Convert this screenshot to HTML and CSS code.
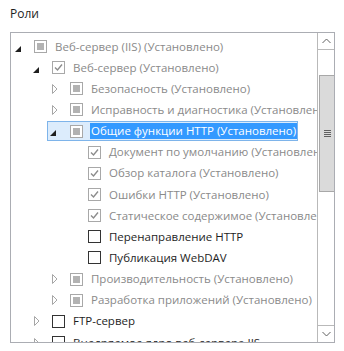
FILE: index.html
```html
<!DOCTYPE html>
<html>
<head>
<meta charset="utf-8">
<link rel="stylesheet" href="styles.css">
</head>
<body>
<div class="title">Роли</div>
<div class="box">
  <div class="tree">
    <div class="row l0"><span class="arr"><svg class="exp" width="6" height="6" viewBox="0 0 6 6"><path d="M0 6H6V0Z"/></svg></span><span class="cb ind dis"></span><span class="txt dim">Веб-сервер (IIS) (Установлено)</span></div>
    <div class="row l1"><span class="arr"><svg class="exp" width="6" height="6" viewBox="0 0 6 6"><path d="M0 6H6V0Z"/></svg></span><span class="cb chk dis"><svg width="11" height="11" viewBox="0 0 11 11"><path d="M2 5.5L4.5 8L9 2.5"/></svg></span><span class="txt dim">Веб-сервер (Установлено)</span></div>
    <div class="row l2"><span class="arr"><svg class="col" width="6" height="10" viewBox="0 0 6 10"><path d="M0.5 0.5L5 5L0.5 9.5Z"/></svg></span><span class="cb ind dis"></span><span class="txt dim">Безопасность (Установлено)</span></div>
    <div class="row l2"><span class="arr"><svg class="col" width="6" height="10" viewBox="0 0 6 10"><path d="M0.5 0.5L5 5L0.5 9.5Z"/></svg></span><span class="cb ind dis"></span><span class="txt dim">Исправность и диагностика (Установлено)</span></div>
    <div class="row l2 sel"><span class="hl"><span class="arr"><svg class="exp" width="6" height="6" viewBox="0 0 6 6"><path d="M0 6H6V0Z"/></svg></span><span class="cb ind dis"></span><span class="txt seltxt">Общие функции HTTP (Установлено)</span></span></div>
    <div class="row l3"><span class="arr"></span><span class="cb chk dis"><svg width="11" height="11" viewBox="0 0 11 11"><path d="M2 5.5L4.5 8L9 2.5"/></svg></span><span class="txt dim">Документ по умолчанию (Установлено)</span></div>
    <div class="row l3"><span class="arr"></span><span class="cb chk dis"><svg width="11" height="11" viewBox="0 0 11 11"><path d="M2 5.5L4.5 8L9 2.5"/></svg></span><span class="txt dim">Обзор каталога (Установлено)</span></div>
    <div class="row l3"><span class="arr"></span><span class="cb chk dis"><svg width="11" height="11" viewBox="0 0 11 11"><path d="M2 5.5L4.5 8L9 2.5"/></svg></span><span class="txt dim">Ошибки HTTP (Установлено)</span></div>
    <div class="row l3"><span class="arr"></span><span class="cb chk dis"><svg width="11" height="11" viewBox="0 0 11 11"><path d="M2 5.5L4.5 8L9 2.5"/></svg></span><span class="txt dim">Статическое содержимое (Установлено)</span></div>
    <div class="row l3"><span class="arr"></span><span class="cb"></span><span class="txt">Перенаправление HTTP</span></div>
    <div class="row l3"><span class="arr"></span><span class="cb"></span><span class="txt">Публикация WebDAV</span></div>
    <div class="row l2"><span class="arr"><svg class="col" width="6" height="10" viewBox="0 0 6 10"><path d="M0.5 0.5L5 5L0.5 9.5Z"/></svg></span><span class="cb ind dis"></span><span class="txt dim">Производительность (Установлено)</span></div>
    <div class="row l2"><span class="arr"><svg class="col" width="6" height="10" viewBox="0 0 6 10"><path d="M0.5 0.5L5 5L0.5 9.5Z"/></svg></span><span class="cb ind dis"></span><span class="txt dim">Разработка приложений (Установлено)</span></div>
    <div class="row l1"><span class="arr"><svg class="col" width="6" height="10" viewBox="0 0 6 10"><path d="M0.5 0.5L5 5L0.5 9.5Z"/></svg></span><span class="cb"></span><span class="txt">FTP-сервер</span></div>
    <div class="row l1"><span class="arr"><svg class="col" width="6" height="10" viewBox="0 0 6 10"><path d="M0.5 0.5L5 5L0.5 9.5Z"/></svg></span><span class="cb"></span><span class="txt">Внедряемое ядро веб-сервера IIS</span></div>
  </div>
  <div class="sb">
    <div class="sb-btn up"><svg width="9" height="6" viewBox="0 0 9 6"><path d="M0.5 5L4.5 1L8.5 5"/></svg></div>
    <div class="sb-track">
      <div class="sb-thumb"><span class="grip"></span><span class="grip"></span><span class="grip"></span><span class="grip"></span></div>
    </div>
    <div class="sb-btn down"><svg width="9" height="6" viewBox="0 0 9 6"><path d="M0.5 1L4.5 5L8.5 1"/></svg></div>
  </div>
</div>
</body>
</html>
```
FILE: styles.css
```css
* { box-sizing: border-box; }
html, body { margin: 0; padding: 0; background: #fff; }
body {
  width: 344px;
  height: 351px;
  overflow: hidden;
  font-family: "Open Sans", "Noto Sans", sans-serif;
  font-size: 11.5px;
  color: #1e1e1e;
}
.title {
  padding: 6px 0 0 10px;
  height: 32px;
  line-height: 16px;
  font-size: 12px;
}
.box {
  margin-left: 10px;
  width: 325px;
  height: 311px;
  border: 1px solid #abadb3;
  display: flex;
  overflow: hidden;
}
.tree {
  flex: 1;
  padding-top: 3px;
  overflow: hidden;
  min-width: 0;
}
.row {
  height: 21.15px;
  display: flex;
  align-items: center;
  white-space: nowrap;
}
.l0 { padding-left: 1px; }
.l1 { padding-left: 19px; }
.l2 { padding-left: 37px; }
.l3 { padding-left: 55px; }
.arr {
  width: 18px;
  flex: none;
  display: flex;
  align-items: center;
  padding-left: 3px;
}
.exp path { fill: #1e1e1e; }
.exp { margin-left: 0; margin-top: 4px; }
.col path { fill: none; stroke: #a6a6a6; stroke-width: 1; }
.col { margin-left: 1px; }
.cb {
  width: 13px;
  height: 13px;
  flex: none;
  margin-left: 4px;
  border: 1px solid #333;
  background: #fff;
  position: relative;
  display: flex;
  align-items: center;
  justify-content: center;
}
.cb.dis { border-color: #a8a8a8; }
.cb.ind::after {
  content: "";
  width: 7px;
  height: 7px;
  background: #b2b2b2;
}
.cb svg path { fill: none; stroke: #8c8c8c; stroke-width: 1.4; }
.txt { margin-left: 8px; line-height: 16px; }
.dim { color: #8a8a8a; }
.sel { position: relative; }
.hl {
  display: flex;
  align-items: center;
  height: 20px;
  margin-left: -1px;
  background: #dcecfc;
  border: 1px solid #7eb4ea;
}
.hl .arr { padding-left: 2px; }
.seltxt {
  background: #3399ff;
  color: #fff;
  padding: 0 1px;
  margin-left: 7px;
}
.sb {
  width: 17px;
  flex: none;
  border-left: 1px solid #b9b9b9;
  display: flex;
  flex-direction: column;
  background: #fff;
}
.sb-btn {
  height: 17px;
  display: flex;
  align-items: center;
  justify-content: center;
}
.sb-btn path { fill: none; stroke: #606060; stroke-width: 1; }
.up { border-bottom: 1px solid #b9b9b9; }
.down { border-top: 1px solid #b9b9b9; }
.sb-track {
  flex: 1;
  padding-top: 25px;
}
.sb-thumb {
  height: 117px;
  margin-left: 1px;
  background: #dadada;
  border: 1px solid #a8a8a8;
  border-right: none;
  display: flex;
  flex-direction: column;
  align-items: center;
  justify-content: center;
  gap: 1px;
}
.grip { width: 7px; height: 1px; background: #606060; }
```
